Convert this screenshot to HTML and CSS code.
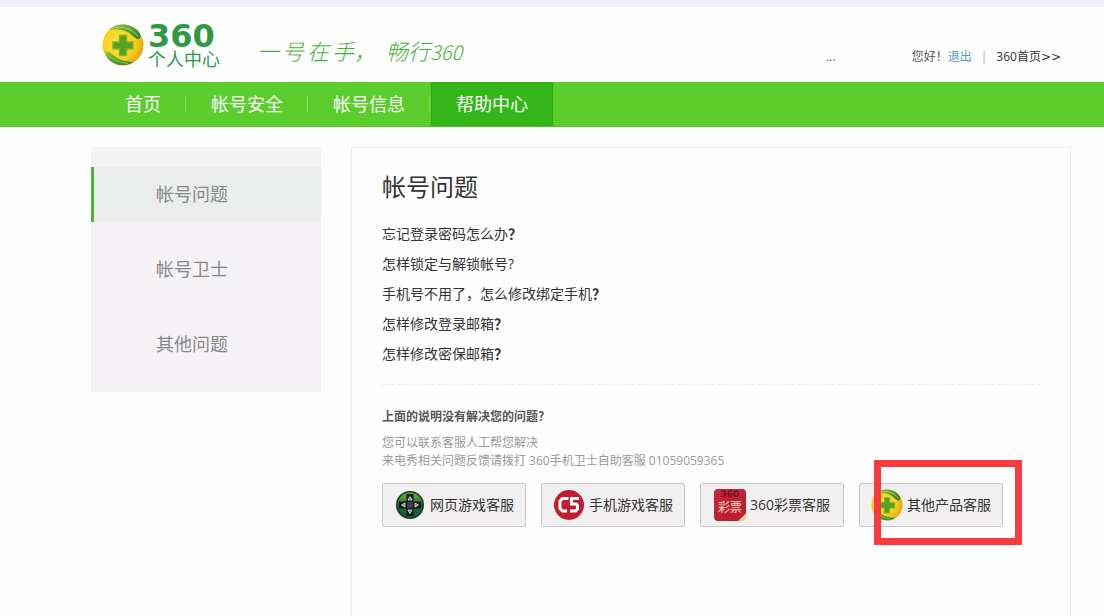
FILE: index.html
```html
<!DOCTYPE html>
<html lang="zh-CN">
<head>
<meta charset="utf-8">
<title>360个人中心 - 帮助中心</title>
<link rel="stylesheet" href="styles.css">
</head>
<body>
<svg class="defs" aria-hidden="true">
  <defs>
    <radialGradient id="gold" cx=".4" cy=".45" r=".65">
      <stop offset="0" stop-color="#ffe93a"/>
      <stop offset=".6" stop-color="#f8cf1c"/>
      <stop offset="1" stop-color="#e0a010"/>
    </radialGradient>
    <linearGradient id="leaf" x1="0" y1="0" x2="1" y2="1">
      <stop offset="0" stop-color="#8cc63a"/>
      <stop offset="1" stop-color="#1d7a2c"/>
    </linearGradient>
    <linearGradient id="pad" x1="0" y1="0" x2="0" y2="1">
      <stop offset="0" stop-color="#6fb52c"/>
      <stop offset=".5" stop-color="#1d6b35"/>
      <stop offset="1" stop-color="#0f5a35"/>
    </linearGradient>
    <symbol id="ball" viewBox="0 0 42 42">
      <circle cx="21" cy="21" r="20.500" fill="url(#gold)"/>
      <path d="M7 6C15-2 29-1 36.500 7.500c2 2.500 2.500 5 1 7C35 16 33 13.500 31 12 25 6 17 4 7 6z" fill="url(#leaf)"/>
      <path d="M10 4.500c10-3 20 0 26 8" fill="none" stroke="#b4dc5a" stroke-width="1"/>
      <path d="M4 28c2-1 4 0 6 2 6 5.500 12 8 22 8-10 6-24 3-28.500-7z" fill="url(#leaf)"/>
      <path d="M5 29.500c5 6 13 9 21 10" fill="none" stroke="#8cc63a" stroke-width="1"/>
      <path d="M17.500 11.500h7v6.500h6.500v7h-6.500v6.500h-7V25H11v-7h6.500z" fill="#58a024" stroke="#7eb32a" stroke-width="1.500" stroke-linejoin="round"/>
    </symbol>
  </defs>
</svg>

<header class="header">
  <a class="logo" href="#">
    <svg class="logo-ball" aria-hidden="true"><use href="#ball"/></svg>
    <span class="logo-text"><span class="logo-num">360</span><span class="logo-name">个人中心</span></span>
  </a>
  <p class="slogan"><span class="slogan-part"><span>一</span><span>号</span><span>在</span><span>手，</span></span><span>畅行<span class="slogan-num">360</span></span></p>
  <div class="account">
    <span class="user">...</span>
    <span>您好！<a class="logout" href="#">退出</a></span>
    <span class="bar">|</span>
    <a class="home" href="#">360首页<span class="arrows">&gt;&gt;</span></a>
  </div>
</header>

<nav class="nav">
  <a class="nav-item nav-first" href="#">首页</a>
  <a class="nav-item" href="#">帐号安全</a>
  <a class="nav-item" href="#">帐号信息</a>
  <a class="nav-item nav-active" href="#" aria-current="page">帮助中心</a>
</nav>

<div class="content">
  <aside class="side">
    <a class="side-item side-active" href="#">帐号问题</a>
    <a class="side-item" href="#">帐号卫士</a>
    <a class="side-item" href="#">其他问题</a>
  </aside>
  <main class="main">
    <h1 class="title">帐号问题</h1>
    <ul class="questions">
      <li><a href="#">忘记登录密码怎么办<b>？</b></a></li>
      <li><a href="#">怎样锁定与解锁帐号?</a></li>
      <li><a href="#">手机号不用了，怎么修改绑定手机<b>？</b></a></li>
      <li><a href="#">怎样修改登录邮箱<b>？</b></a></li>
      <li><a href="#">怎样修改密保邮箱<b>？</b></a></li>
    </ul>
    <section class="contact">
      <h2 class="contact-title">上面的说明没有解决您的问题？</h2>
      <p class="contact-text">您可以联系客服人工帮您解决</p>
      <p class="contact-text">来电秀相关问题反馈请拨打 360手机卫士自助客服 01059059365</p>
      <div class="services">
        <button class="service" type="button">
          <svg class="icon" viewBox="0 0 32 32" aria-hidden="true">
            <circle cx="16" cy="16" r="14" fill="#143c26"/>
            <circle cx="16" cy="16" r="12.500" fill="url(#pad)"/>
            <path d="M12.500 5h7v7.500H27v7h-7.500V27h-7v-7.500H5v-7h7.500z" fill="#15171c"/>
            <rect x="13" y="13" width="6" height="6" rx="1" fill="#3d3d4d"/>
            <path d="M16 7.500l2 3.500h-4zM16 24.500l2-3.500h-4zM7.500 16l3.500-2v4zM24.500 16L21 14v4z" fill="#777" stroke="#eee" stroke-width=".8"/>
          </svg>
          <span>网页游戏客服</span>
        </button>
        <button class="service" type="button">
          <svg class="icon" viewBox="0 0 32 32" aria-hidden="true">
            <circle cx="16" cy="16" r="15" fill="#bd1f30"/>
            <path d="M15.500 9.500H9.500L7 12v7.500L9.500 22H14" fill="none" stroke="#fff" stroke-width="3"/>
            <path d="M26 9.500H18.500V15H23l1.500 1.500V20L22.500 22H17" fill="none" stroke="#fff" stroke-width="3"/>
          </svg>
          <span>手机游戏客服</span>
        </button>
        <button class="service" type="button">
          <span class="lottery" aria-hidden="true"><span class="lottery-num">360</span><span class="lottery-name">彩票</span></span>
          <span>360彩票客服</span>
        </button>
        <div class="marked">
          <button class="service" type="button">
            <svg class="icon" aria-hidden="true"><use href="#ball"/></svg>
            <span>其他产品客服</span>
          </button>
          <span class="marker"></span>
        </div>
      </div>
    </section>
  </main>
</div>
</body>
</html>
```

FILE: styles.css
```css
* { box-sizing: border-box; }

body {
  display: flex;
  flex-direction: column;
  min-height: 100vh;
  margin: 0;
  border-top: 7px solid #f0eff5;
  background: #fefefe;
  color: #333;
  font: 14px/20px "Open Sans", "Noto Sans CJK SC", sans-serif;
}

a { color: inherit; text-decoration: none; }
h1, h2, p, ul { margin: 0; padding: 0; font-weight: 400; }
.defs { position: absolute; width: 0; height: 0; }

.header {
  display: flex;
  align-items: center;
  height: 75px;
  padding: 0 43px 0 102px;
}

.logo { display: flex; gap: 4px; align-items: center; color: #2f9a43; }
.logo-ball { width: 42px; height: 42px; }
.logo-text { display: flex; flex-direction: column; width: 76px; padding-top: 3px; }
.logo-num { font: 700 32px/24px "DejaVu Sans", sans-serif; }
.logo-name { font: 400 18px/20px "Noto Sans CJK SC", sans-serif; }

.slogan {
  display: flex;
  gap: 10px;
  margin-left: 33px;
  padding-top: 12px;
  color: #45b036;
  font: italic 300 22px/24px "Noto Sans CJK SC", sans-serif;
}
.slogan-part { display: flex; gap: 3px; }
.slogan-num { font-size: 20px; }

.account {
  display: flex;
  margin-left: auto;
  padding-top: 25px;
  color: #555;
  font-size: 12px;
}
.user { margin-right: 76px; }
.logout { color: #4a9cc8; }
.bar { margin: 0 9px; color: #aaa; }
.home { color: #333; }
.arrows { font-family: "DejaVu Sans", sans-serif; }

.nav {
  display: flex;
  height: 45px;
  padding-left: 101px;
  background: #5bcd2c;
  border-bottom: 1px solid #58bc30;
  color: #fff;
  font-size: 18px;
  line-height: 44px;
}
.nav-item {
  display: flex;
  align-items: center;
  padding: 0 0 0 25px;
}
.nav-item::after {
  width: 1px;
  height: 16px;
  margin-left: 24px;
  background: #86dc63;
  content: "";
}
.nav-first { padding-left: 24px; }
.nav-active {
  margin-left: 1px;
  padding: 0 24px;
  background: #34b61a;
  border: solid #2fa51b;
  border-width: 0 1px;
}
.nav-active::after { display: none; }

.content {
  display: flex;
  flex: 1;
  gap: 30px;
  align-items: flex-start;
  padding: 20px 33px 0 91px;
}

.side {
  display: flex;
  flex: 0 0 230px;
  flex-direction: column;
  gap: 20px;
  padding: 20px 0;
  background: #f4f2f5;
  color: #888;
  font-size: 18px;
  line-height: 55px;
}
.side-item { padding-left: 62px; border-left: 3px solid transparent; }
.side-active { background: #eaedeb; border-color: #4db236; }

.main {
  flex: 1;
  align-self: stretch;
  padding: 20px 30px;
  border: 1px solid #e8e8ea;
  border-bottom: 0;
}
.title { font-size: 24px; line-height: 38px; }
.questions {
  padding: 13px 0 15px;
  border-bottom: 1px dashed #ececec;
  line-height: 30px;
  list-style: none;
}

.contact { padding-top: 22px; }
.contact-title { margin-bottom: 7px; color: #555; font-size: 12px; font-weight: 700; }
.contact-text { color: #999; font-size: 12px; line-height: 18px; }

.services { display: flex; flex-wrap: wrap; gap: 15px; margin-top: 13px; }
.service {
  display: flex;
  align-items: center;
  justify-content: center;
  gap: 4px;
  width: 144px;
  height: 44px;
  padding: 0;
  background: #f1eff0;
  border: 1px solid #c9c6ca;
  border-radius: 2px;
  color: #333;
  font: inherit;
}
.icon { width: 32px; height: 32px; }
.lottery {
  display: flex;
  flex-direction: column;
  align-items: center;
  width: 32px;
  height: 32px;
  background: linear-gradient(315deg, #f0c890 5px, #b91f30 6px, #c4283a);
  border-radius: 4px;
}
.lottery-num { color: #7d1020; font: 700 9px/11px "DejaVu Sans", sans-serif; }
.lottery-name { color: #f8dcc0; font-size: 12px; line-height: 15px; }

.marked { position: relative; }
.marker {
  position: absolute;
  inset: -23px -19px -18px 15px;
  border: 7px solid #f93a3e;
  pointer-events: none;
}
```
